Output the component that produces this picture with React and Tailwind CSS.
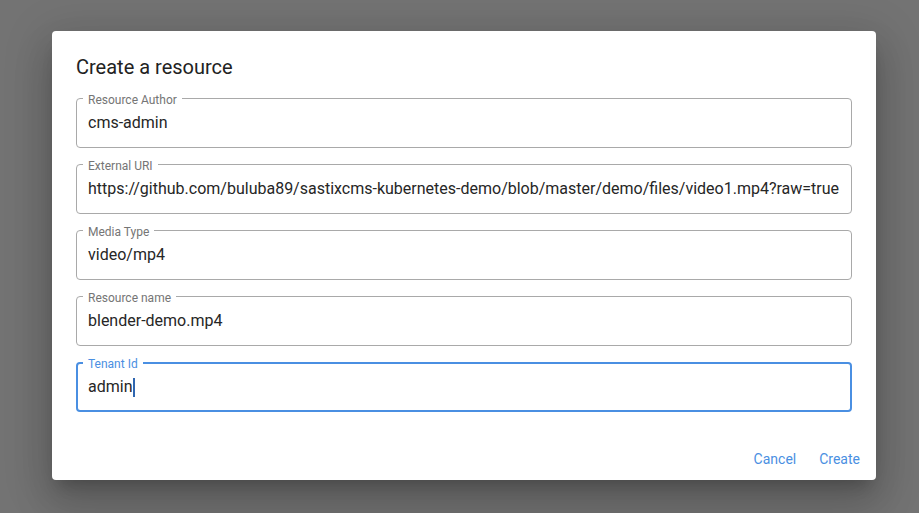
import React from 'react'

const fields = [
  { label: 'Resource Author', value: 'cms-admin' },
  { label: 'External URI', value: 'https://github.com/buluba89/sastixcms-kubernetes-demo/blob/master/demo/files/video1.mp4?raw=true' },
  { label: 'Media Type', value: 'video/mp4' },
  { label: 'Resource name', value: 'blender-demo.mp4' },
  { label: 'Tenant Id', value: 'admin', focused: true },
]

function Field({ label, value, focused }) {
  return (
    <div
      className={
        'relative h-[50px] rounded flex items-center ' +
        (focused ? 'border-2 border-[#4a8fe2] px-[10px]' : 'border border-[#a9a9a9] px-[11px]')
      }
    >
      <span
        className={
          'absolute px-[5px] bg-white text-xs leading-[14px] ' +
          (focused ? 'top-[-7px] left-[5px] text-[#4a8fe2]' : 'top-[-6px] left-[6px] text-[#757575]')
        }
      >
        {label}
      </span>
      <span className="text-base text-[#262626] whitespace-nowrap flex items-center">
        {value}
        {focused ? <span className="inline-block w-[2px] h-[19px] bg-[#2f66b0] ml-[1px]" /> : null}
      </span>
    </div>
  )
}

export default function App() {
  return (
    <div
      className="w-[919px] h-[513px] bg-[#737373] pl-[52px] pt-[31px]"
      style={{ fontFamily: 'Roboto, "Liberation Sans", sans-serif' }}
    >
      <div className="w-[824px] h-[449px] bg-white rounded flex flex-col shadow-[0_11px_15px_-7px_rgba(0,0,0,0.2),0_24px_38px_3px_rgba(0,0,0,0.14),0_9px_46px_8px_rgba(0,0,0,0.12)]">
        <h2 className="px-6 pt-[20px] pb-[15px] text-xl leading-[32px] text-[#222]">Create a resource</h2>
        <div className="px-6 flex flex-col gap-4">
          {fields.map((f) => (
            <Field key={f.label} {...f} />
          ))}
        </div>
        <div className="mt-[29px] h-[36px] flex justify-end items-center gap-[23px] pr-4 text-sm text-[#4a8fe2]">
          <button>Cancel</button>
          <button>Create</button>
        </div>
      </div>
    </div>
  )
}
